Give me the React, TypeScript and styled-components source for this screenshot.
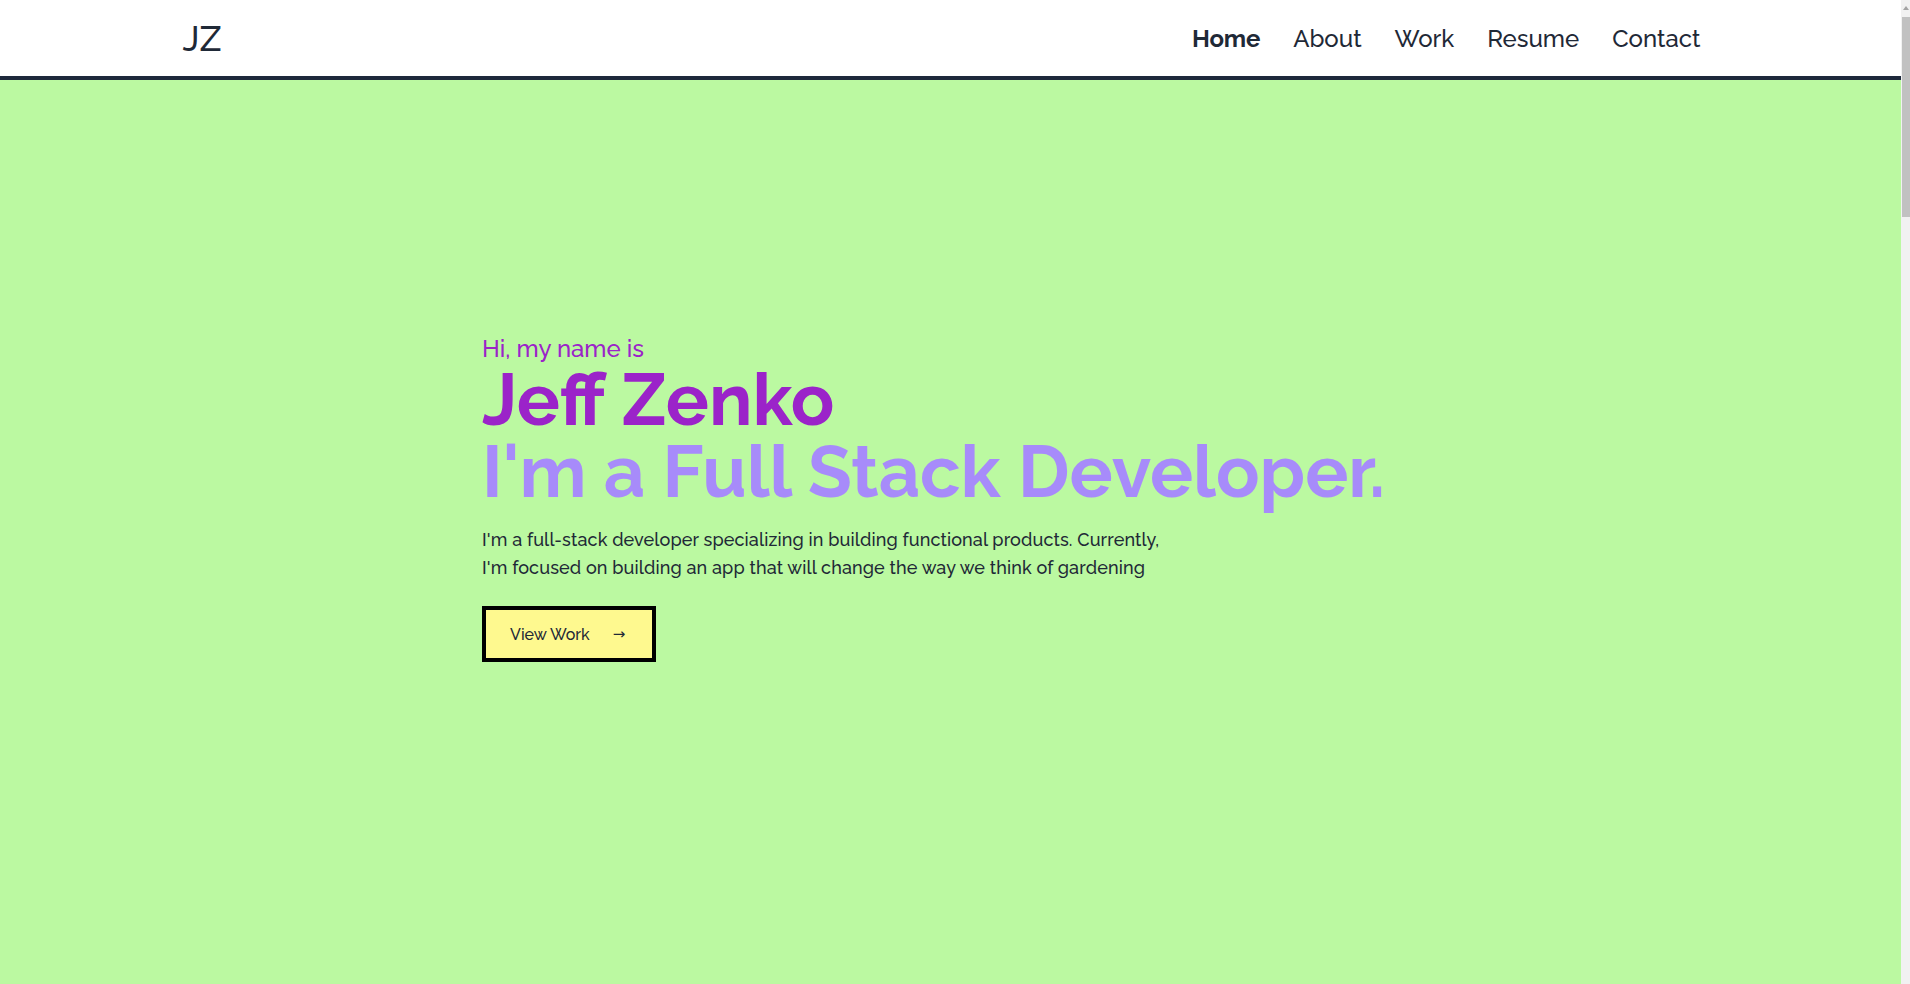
import React from "react";
import styled, { createGlobalStyle } from "styled-components";

const Global = createGlobalStyle`
  html, body { margin: 0; padding: 0; }
  body {
    font-family: Raleway, Lato, "Noto Sans", sans-serif;
    color: #1f2937;
    background: #bbf9a1;
    margin-right: 9px;
  }
  * { box-sizing: border-box; }
`;

const ScrollTrack = styled.div`
  position: fixed;
  top: 0;
  right: 0;
  width: 9px;
  height: 100vh;
  background: #f1f1f1;
  z-index: 10;
`;

const ScrollArrow = styled.div`
  position: absolute;
  top: 6px;
  left: 2px;
  width: 0;
  height: 0;
  border-left: 3px solid transparent;
  border-right: 3px solid transparent;
  border-bottom: 4px solid #a3a3a3;
`;

const ScrollThumb = styled.div`
  position: absolute;
  top: 17px;
  left: 1px;
  width: 8px;
  height: 200px;
  background: #c1c1c1;
`;

const Header = styled.header`
  background: #ffffff;
  border-bottom: 4px solid #1e293b;
`;

const HeaderInner = styled.div`
  max-width: 1536px;
  height: 76px;
  margin: 0 auto;
  padding: 0 18px 0 0;
  display: flex;
  align-items: center;
  justify-content: space-between;
`;

const Logo = styled.a`
  font-size: 35px;
  font-weight: 500;
  color: #1f2937;
  text-decoration: none;
`;

const Nav = styled.nav`
  display: flex;
  align-items: center;
  gap: 33px;
`;

const NavLink = styled.a<{ $active?: boolean }>`
  font-size: 24px;
  font-weight: ${(p) => (p.$active ? 700 : 500)};
  letter-spacing: ${(p) => (p.$active ? "-0.2px" : "0")};
  color: #1f2937;
  text-decoration: none;
`;

const Hero = styled.section`
  background: #bbf9a1;
  min-height: 904px;
  padding: 252px 0 0 482px;
`;

const Greeting = styled.p`
  margin: 0;
  font-size: 24px;
  line-height: 33px;
  font-weight: 500;
  color: #9b23c9;
`;

const Name = styled.h1`
  margin: 0;
  font-size: 72px;
  line-height: 70px;
  font-weight: 700;
  color: #9b23c9;
`;

const Role = styled.h2`
  margin: 0;
  font-size: 72px;
  line-height: 74px;
  font-weight: 700;
  color: #a78bfa;
`;

const Intro = styled.p`
  margin: 17px 0 0;
  font-size: 18px;
  line-height: 28px;
  font-weight: 500;
  letter-spacing: 0.12px;
  color: #1f2937;
`;

const Button = styled.a`
  margin-top: 24px;
  display: inline-flex;
  align-items: center;
  gap: 23px;
  height: 56px;
  padding: 0 27px 0 24px;
  background: #fef98f;
  border: 4px solid #000000;
  color: #1f2937;
  font-size: 16px;
  font-weight: 500;
  text-decoration: none;
`;

const Arrow = styled.span`
  font-size: 15px;
  font-family: "DejaVu Sans", sans-serif;
`;

const Section = styled.section`
  min-height: 940px;
  padding: 120px 482px;
  background: #bbf9a1;
`;

const SectionTitle = styled.h2`
  margin: 0;
  font-size: 48px;
  color: #9b23c9;
`;

export default function App() {
  return (
    <>
      <Global />
      <ScrollTrack>
        <ScrollArrow />
        <ScrollThumb />
      </ScrollTrack>
      <Header>
        <HeaderInner>
          <Logo href="#">JZ</Logo>
          <Nav>
            <NavLink $active href="#">Home</NavLink>
            <NavLink href="#about">About</NavLink>
            <NavLink href="#work">Work</NavLink>
            <NavLink href="#resume">Resume</NavLink>
            <NavLink href="#contact">Contact</NavLink>
          </Nav>
        </HeaderInner>
      </Header>
      <Hero>
        <Greeting>Hi, my name is</Greeting>
        <Name>Jeff Zenko</Name>
        <Role>I'm a Full Stack Developer.</Role>
        <Intro>
          I'm a full-stack developer specializing in building functional products. Currently,
          <br />
          I'm focused on building an app that will change the way we think of gardening
        </Intro>
        <Button href="#work">
          View Work <Arrow>→</Arrow>
        </Button>
      </Hero>
      <Section id="about"><SectionTitle>About</SectionTitle></Section>
      <Section id="work"><SectionTitle>Work</SectionTitle></Section>
      <Section id="resume"><SectionTitle>Resume</SectionTitle></Section>
      <Section id="contact"><SectionTitle>Contact</SectionTitle></Section>
    </>
  );
}
